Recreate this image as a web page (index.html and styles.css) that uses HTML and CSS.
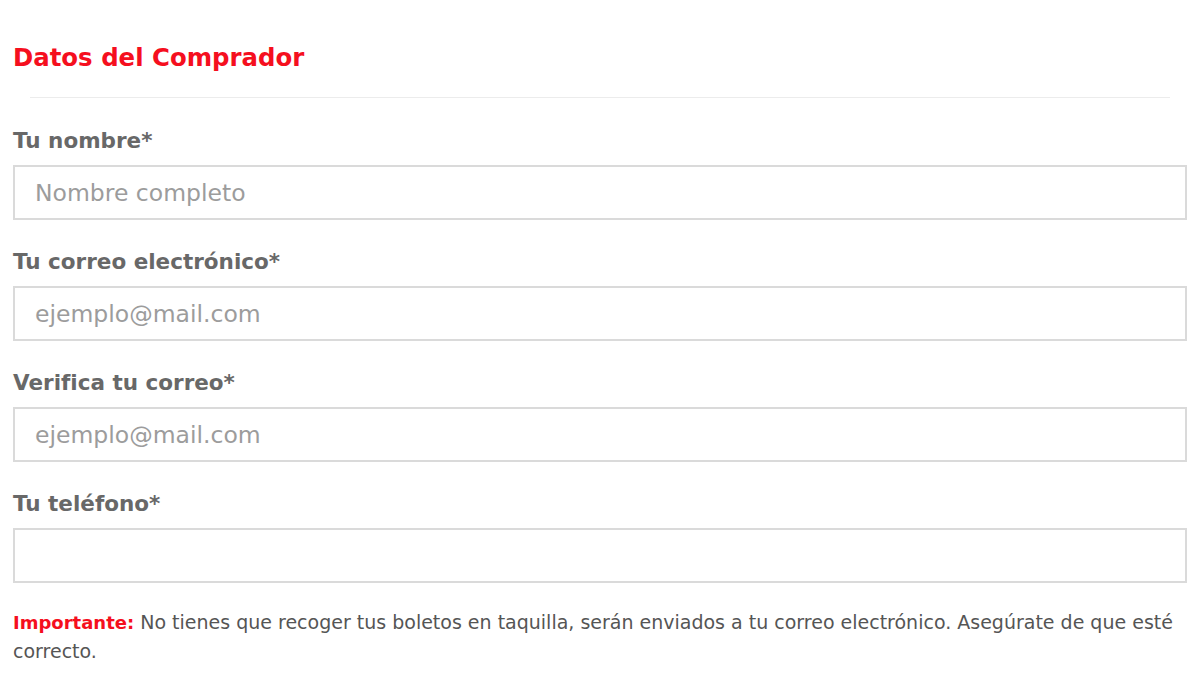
FILE: index.html
```html
<!DOCTYPE html>
<html lang="es">
<head>
<meta charset="utf-8">
<link rel="stylesheet" href="styles.css">
</head>
<body>
<div class="form">
  <h2 class="title">Datos del Comprador</h2>
  <hr class="divider">
  <div class="field">
    <label class="label">Tu nombre*</label>
    <input class="input" type="text" placeholder="Nombre completo">
  </div>
  <div class="field">
    <label class="label">Tu correo electrónico*</label>
    <input class="input" type="text" placeholder="ejemplo@mail.com">
  </div>
  <div class="field">
    <label class="label">Verifica tu correo*</label>
    <input class="input" type="text" placeholder="ejemplo@mail.com">
  </div>
  <div class="field">
    <label class="label">Tu teléfono*</label>
    <input class="input" type="text">
  </div>
  <p class="note"><strong class="note-strong">Importante:</strong> No tienes que recoger tus boletos en taquilla, serán enviados a tu correo electrónico. Asegúrate de que esté correcto.</p>
</div>
</body>
</html>
```
FILE: styles.css
```css
html, body {
  margin: 0;
  padding: 0;
  background: #ffffff;
}
.form {
  width: 1174px;
  padding: 0 13px;
  font-family: "DejaVu Sans", "Open Sans", sans-serif;
}
.title {
  margin: 0;
  padding-top: 40px;
  height: 36px;
  line-height: 36px;
  font-size: 24.4px;
  font-weight: 700;
  color: #f50f1e;
}
.divider {
  border: 0;
  border-top: 1px solid #ececec;
  margin: 21px 17px 0 17px;
  height: 0;
}
.field {
  display: flex;
  flex-direction: column;
  margin-top: 30px;
}
.field + .field {
  margin-top: 29px;
}
.label {
  font-size: 21.5px;
  font-weight: 700;
  color: #686868;
  line-height: 26px;
  height: 26px;
}
.input {
  margin-top: 11px;
  box-sizing: border-box;
  height: 55px;
  width: 100%;
  border: 2px solid #dadada;
  padding: 0 20px;
  font-family: "DejaVu Sans", "Open Sans", sans-serif;
  font-size: 23.5px;
  color: #555;
  outline: none;
}
.input::placeholder {
  color: #9c9c9c;
}
.note {
  margin: 25px 0 0 0;
  font-size: 19px;
  line-height: 29px;
  color: #555;
}
.note-strong {
  color: #f50f1e;
  font-weight: 700;
  font-size: 18px;
}
```
